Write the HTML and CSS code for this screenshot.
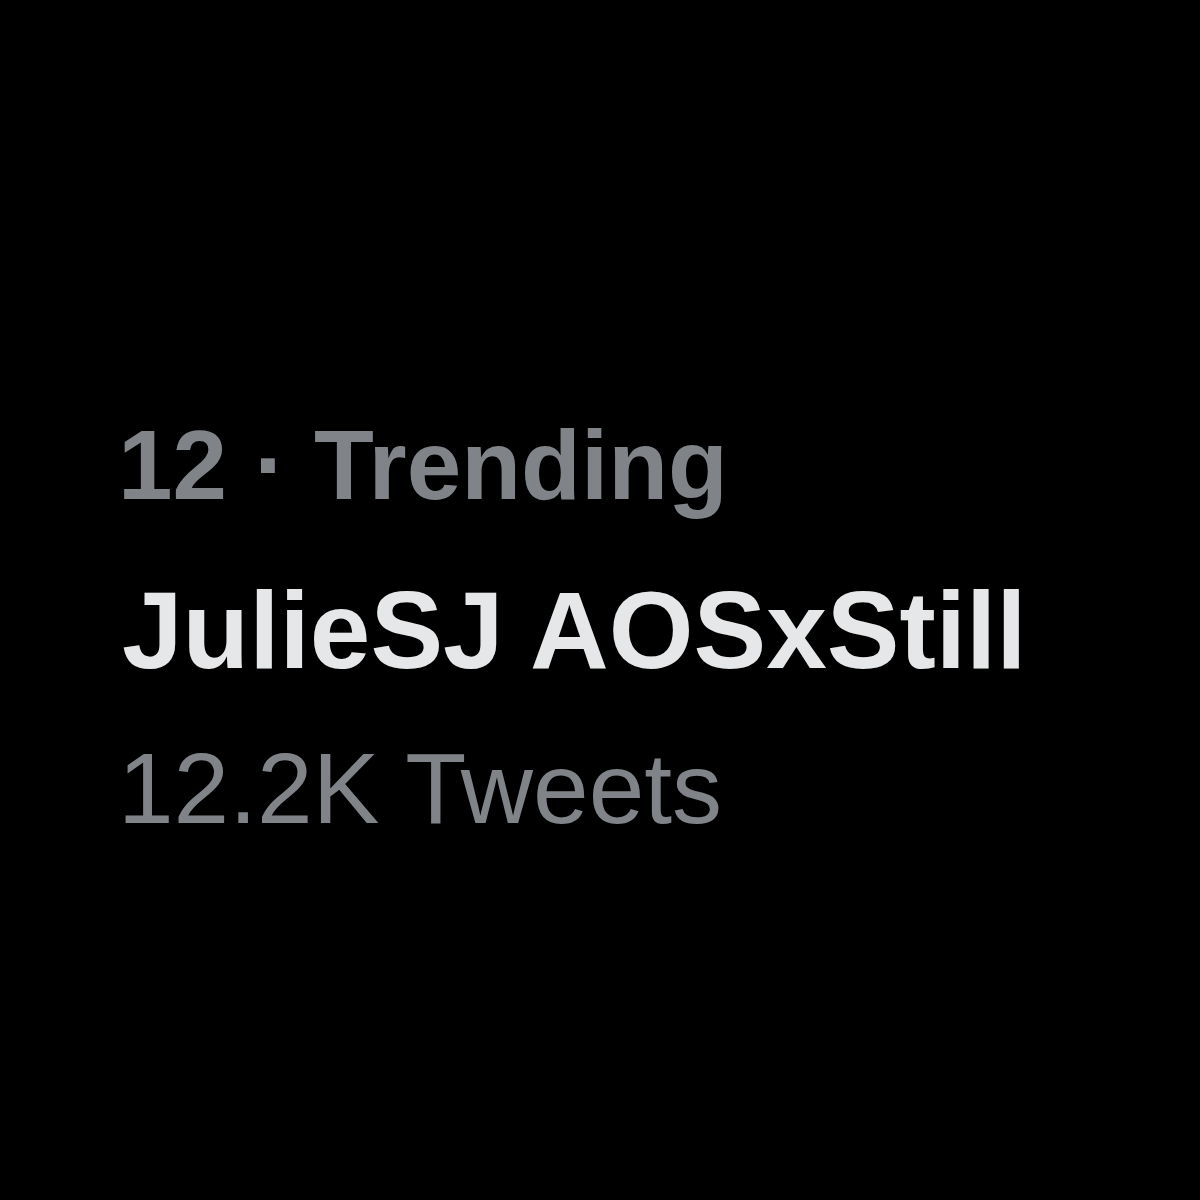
FILE: index.html
```html
<!DOCTYPE html>
<html lang="en">
<head>
  <meta charset="UTF-8" />
  <title>Trending</title>
  <link rel="stylesheet" href="styles.css">
</head>
<body>
  <div class="trend">
    <div class="trend-meta">12 · Trending</div>
    <div class="trend-name">JulieSJ AOSxStill</div>
    <div class="trend-count">12.2K Tweets</div>
  </div>
</body>
</html>
```
FILE: styles.css
```css
body {
  margin: 0;
  background: #000;
  font-family: 'Liberation Sans', Arial, sans-serif;
  height: 100vh;
}
.trend {
  display: flex;
  flex-direction: column;
  padding: 407px 0 0 118px;
}
.trend-meta {
  font-size: 98px;
  line-height: 1.2;
  font-weight: bold;
  color: #808489;
}
.trend-name {
  margin-top: 40px;
  padding-left: 4px;
  font-size: 109px;
  line-height: 1.2;
  font-weight: bold;
  color: #e6e7e8;
}
.trend-count {
  margin-top: 33px;
  font-size: 100px;
  line-height: 1.2;
  color: #808489;
}
```
